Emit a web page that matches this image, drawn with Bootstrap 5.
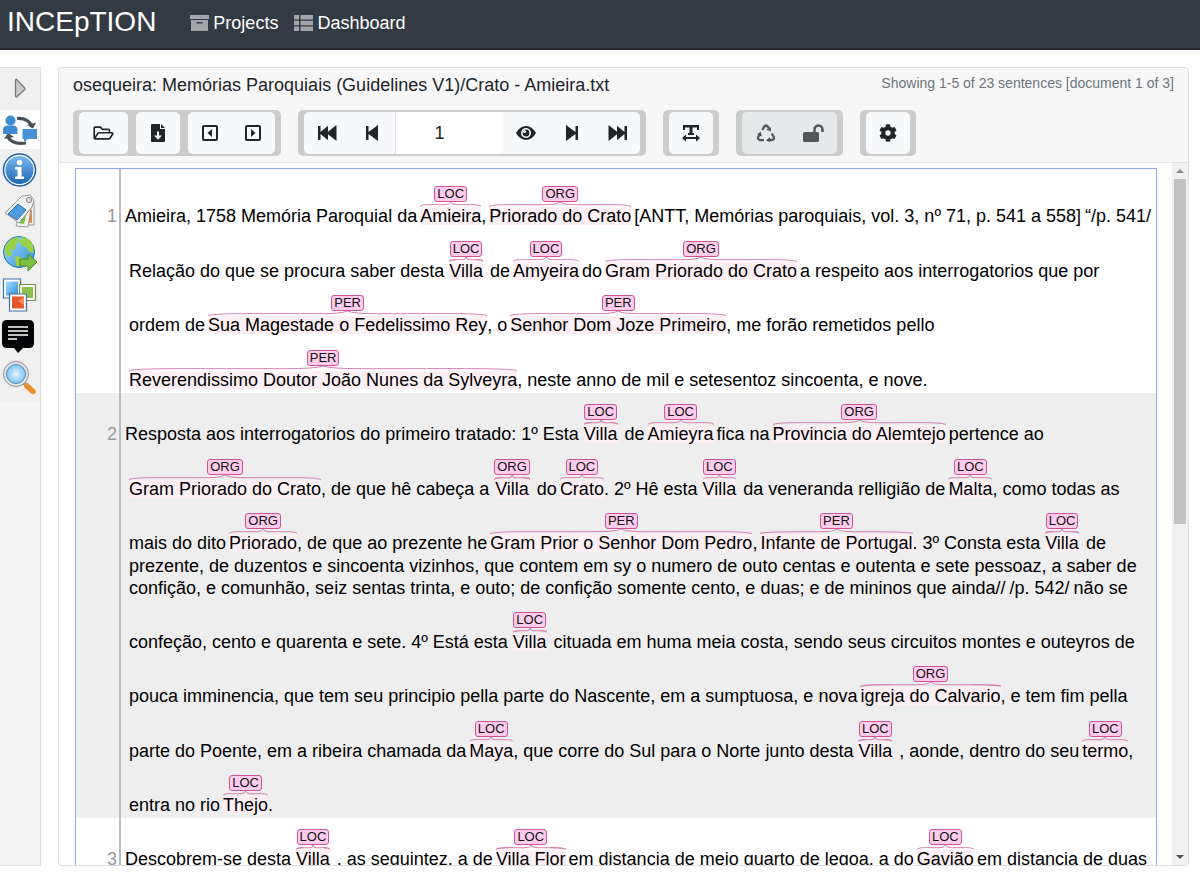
<!doctype html>
<html lang="en">
<head>
<meta charset="utf-8">
<meta name="viewport" content="width=device-width, initial-scale=1">
<title>INCEpTION</title>
<link href="https://cdn.jsdelivr.net/npm/bootstrap@5.3.0/dist/css/bootstrap.min.css" rel="stylesheet">
<script src="https://cdn.jsdelivr.net/npm/bootstrap@5.3.0/dist/js/bootstrap.bundle.min.js"></script>
<style>
body { font-family: "Liberation Sans", Arial, sans-serif; font-size: 18px; line-height: 22px; color: #212529; background: #fff; }
.topbar { --bs-navbar-padding-y: 0; background: #323a43; border-bottom: 2px solid #272b30; min-height: 50px; }
.topbar .navbar-brand { font-size: 28px; line-height: 44px; color: #fff; padding: 0; margin: 0 34px 4px 0; }
.topbar .navbar-nav { padding-bottom: 2px; }
.topbar .nav-link { color: #fff; font-size: 18px; }
.topbar svg { fill: #a3a6a9; }
.sidetabs { width: 41px; margin-right: 17px; background: #f5f5f5; border: 1px solid #ddd; border-left: 0; }
.sidetabs button { width: 100%; height: 42px; border: 0; padding: 0; background: #f0f0f0; display: block; text-align: left; }
.sidetabs button.current { background: #fff; }
.sidetabs svg { display: block; margin-left: 2px; }
.doc { border-color: #ddd; border-radius: 4px; }
.doc .card-header { background: #f7f7f7; border-color: #dfe3e5; padding: 6px 14px 6px 14px; }
.doc-status { font-size: 14px; line-height: 18px; color: #6c757d; }
.tools { gap: 17px; padding-top: 14px; }
.tool-set { background: #ccc; border-radius: 5px; padding: 2px 6px; gap: 8px; min-height: 46px; }
.tool-set .btn { height: 42px; min-width: 44px; padding: 0; border: 0; background: #f8f9fa; border-radius: 5px; color: #212529; display: flex; align-items: center; justify-content: center; }
.tool-set .btn-wide { min-width: 49px; }
.tool-set .btn:disabled { min-width: 48px; background: #e6e9e9; color: #212529; opacity: 1; }
.tool-set .btn:disabled svg { opacity: .75; }
.tool-set .steps > .btn { min-width: 46px; }
.tool-set .steps > .btn-wide { min-width: 49px; }
.tool-set input { width: 107px; height: 42px; border: 1px solid #dfe3e5; border-width: 0 1px; border-radius: 0; text-align: center; padding: 0 18px 0 0; font-size: 18px; color: #212529; flex: none; }
.tool-set .btn-group > .btn { flex: none; }
.page-view { border: 1px solid #8ca8f0; border-bottom: 0; margin: 5px 15px 0 16px; padding-top: 6px; color: #000; }
.sentence { display: flex; }
.sentence.shade { background: #eee; }
.num { width: 45px; flex: none; text-align: right; padding: 30px 2px 0 0; border-right: 2px solid #bbb; color: #999; }
.lead-space { height: 6px; width: 45px; border-right: 2px solid #bbb; margin-top: -6px; }
.rows { padding-left: 8px; }
.row-line { display: flex; align-items: flex-end; height: 54px; padding-bottom: 2px; white-space: pre; }
.row-line:nth-child(even) { height: 55px; }
.row-line.low { height: 22px; padding-bottom: 1px; }
.row-line.first { margin-left: -4px; }
.anno { display: flex; flex-direction: column; align-items: center; margin: 0 3px 2px 3px; line-height: 18px; }
.anno.stop { margin-right: 0; }
.anno.start { margin-left: 0; }
.anno.apart { margin-left: 5px; margin-right: 7px; }
.anno b { font-weight: 400; font-size: 13px; line-height: 14px; border: 1px solid #cc5595; border-radius: 3px; background: #ffccee; padding: 0 2px; color: #111; }
.anno i { align-self: stretch; height: 5px; background: url("data:image/svg+xml,%3Csvg xmlns='http://www.w3.org/2000/svg' viewBox='0 0 100 5' preserveAspectRatio='none'%3E%3Cpath d='M0 4.500C4 2 14 2.700 40 2.700Q48 2.700 50 0Q52 2.700 60 2.700C86 2.700 96 2 100 4.500' fill='none' stroke='%23d77faf' vector-effect='non-scaling-stroke'/%3E%3C/svg%3E") 0 0 / 100% 100% no-repeat; }
.anno span { background: #fdf0f5; border-radius: 2px; }
.scroller { width: 16px; flex: none; background: #f1f1f1; padding: 6px 2px; }
.thumb { background: #c1c1c1; margin-top: 6px; }
.arrow-up, .arrow-down { border: 4px solid transparent; width: 8px; margin: 0 auto; }
.arrow-up { border-top: 0; border-bottom-color: #8a8a8a; }
.arrow-down { border-bottom: 0; border-top-color: #505050; margin-top: auto; }
</style>
</head>
<body class="d-flex flex-column vh-100 overflow-hidden">
<nav class="navbar navbar-expand topbar">
  <div class="container-fluid justify-content-start" style="--bs-gutter-x:14px">
    <a class="navbar-brand" href="#">INCEpTION</a>
    <div class="navbar-nav gap-3">
      <a class="nav-link d-flex align-items-center gap-1 p-0" href="#"><svg width="19" height="16" viewBox="0 0 19 16"><path d="M0 0h19v4H0zM1 5h17v11H1zM6.500 7v1.500h6V7z" fill-rule="evenodd"/></svg>Projects</a>
      <a class="nav-link d-flex align-items-center gap-1 p-0" href="#"><svg width="19" height="16" viewBox="0 0 19 16"><path d="M0 0h5v4.500H0zM6.500 0H19v4.500H6.500zM0 5.800h5v4.400H0zM6.500 5.800H19v4.400H6.500zM0 11.500h5V16H0zM6.500 11.500H19V16H6.500z"/></svg>Dashboard</a>
    </div>
  </div>
</nav>

<svg width="0" height="0" class="position-absolute" aria-hidden="true">
  <defs>
    <linearGradient id="gBlue" x2="0" y2="1"><stop offset="0" stop-color="#7bb8ee"/><stop offset="1" stop-color="#1f66b5"/></linearGradient>
    <linearGradient id="gSky" x2="1" y2="1"><stop offset="0" stop-color="#a9dcff"/><stop offset="1" stop-color="#2b8fd6"/></linearGradient>
    <radialGradient id="gGlass"><stop offset="0" stop-color="#e5f6ff"/><stop offset="1" stop-color="#7fc4f0"/></radialGradient>
  </defs>
</svg>

<main class="d-flex flex-fill overflow-hidden" style="padding:17px 11px 9px 0">
  <aside class="sidetabs flex-shrink-0">
    <button type="button" aria-label="Expand"><svg width="36" height="42" viewBox="0 0 36 42"><path d="M13.500 12.500q0-2 1.500-.8l7.500 8q1 1 0 2l-7.500 7q-1.500 1-1.500-1z" fill="#c9c9c9" stroke="#777" stroke-width="1.300"/></svg></button>
    <button type="button" class="current" aria-label="Curation" style="height:39px"><svg width="36" height="36" viewBox="0 0 36 36"><path d="M15 6.500Q27 6 30 15M5 24Q10 33 24 31" fill="none" stroke="#4a5058" stroke-width="3.200"/><path d="M25 13l6 3.500 3-6zM2 27l4-6 6 4z" fill="#4a5058"/><circle cx="8.500" cy="8.500" r="5" fill="#3f8ad0"/><path d="M1 22v-4q0-4.500 5-4.500h5q4.500 0 4.500 4.500v4z" fill="#3f8ad0"/><path d="M20.500 17H35v10h-9l-4 3v-3h-1.500z" fill="#4a90d4"/></svg></button>
    <button type="button" aria-label="Document info"><svg width="36" height="38" viewBox="0 0 36 38"><circle cx="17.500" cy="19" r="16" fill="#fff" stroke="#1b5fa8" stroke-width="1.500"/><circle cx="17.500" cy="19" r="14" fill="url(#gBlue)"/><circle cx="17.500" cy="11.500" r="2.700" fill="#fff"/><path d="M13 16h6.500v9.500H22V28h-9v-2.500h2.500v-7H13z" fill="#fff"/></svg></button>
    <button type="button" aria-label="Layers"><svg width="36" height="40" viewBox="0 0 36 40"><g fill="#f4f4f4" stroke="#999"><path d="M25 7l7 3v23H22z"/><path d="M26 17l4 1v13h-5z" fill="#e88a4a" stroke="none"/><path d="M22 7l8 3-4 25-12-1z"/><path d="M21 17l4 3-3 12-6-1z" fill="#7cc043" stroke="none"/><path d="M20 4l8-1 4 5-2 7-13 16-14-10z"/></g><path d="M16 12l8 6-9 10-9-6z" fill="#4f9fe0" stroke="#2c6cb0"/><circle cx="27" cy="8" r="2.700" fill="#ddd" stroke="#888"/></svg></button>
    <button type="button" aria-label="External search"><svg width="36" height="40" viewBox="0 0 36 40"><circle cx="17" cy="18" r="15.500" fill="url(#gSky)" stroke="#2477b8"/><path d="M3 13q4-9 13-10l2 4-4 3-1 5-5 2 2 4-4 2q-4-4-3-10zM20 3q8 1 11 8l1 8-5-1-3-5-4-1-2-4zM13 22l6 1 2 4-3 5h-4z" fill="#9bd045"/><path d="M18 25h8v-5l9 8-9 9v-5h-8z" fill="#7dc142" stroke="#4a8a1c"/></svg></button>
    <button type="button" aria-label="Images"><svg width="36" height="40" viewBox="0 0 36 40"><g fill="#fff" stroke-width="1.200"><path d="M1.500 3h17v19h-17z" stroke="#3a6ea8"/><path d="M4 5.500h12v14H4z" fill="url(#gSky)"/><path d="M17.500 8.500h16v16h-16z" stroke="#6f8f4a"/><path d="M20 11h11v11H20z" fill="#8fc24c"/><path d="M7.500 18h17v17h-17z" stroke="#4a6a98"/><path d="M10 20.500h12v12H10z" fill="#e5562c"/><path d="M16 25l6-4v8z" fill="#f58a5a"/></g></svg></button>
    <button type="button" aria-label="Comments"><svg width="36" height="40" viewBox="0 0 36 40"><path d="M5 2h22q5 0 5 5v18q0 5-5 5h-6l-5 5-4-5H5q-5 0-5-5V7q0-5 5-5z" fill="#050508"/><path d="M6 9h20M6 13h20M6 17h20M6 21h9" stroke="#fff" stroke-width="1.600"/></svg></button>
    <button type="button" aria-label="Search"><svg width="36" height="42" viewBox="0 0 36 42"><path d="M21 23l8 8" stroke="#999" stroke-width="4"/><path d="M25 27l6 5.500" stroke="#e8912c" stroke-width="5.500" stroke-linecap="round"/><circle cx="14" cy="15" r="12.500" fill="#e6e6e6" stroke="#8a8f98"/><circle cx="14" cy="15" r="9.500" fill="url(#gGlass)" stroke="#4b8fc4"/></svg></button>
  </aside>

  <section class="card doc flex-fill overflow-hidden">
    <header class="card-header">
      <div class="d-flex justify-content-between">
        <div>osequeira: Memórias Paroquiais (Guidelines V1)/Crato - Amieira.txt</div>
        <div class="doc-status">Showing 1-5 of 23 sentences [document 1 of 3]</div>
      </div>
      <div class="tools d-flex">
        <div class="tool-set d-flex">
          <button type="button" class="btn btn-wide" aria-label="Open"><svg width="21" height="18" viewBox="0 0 576 512" fill="currentColor"><path d="M527.900 224H480v-48c0-26.500-21.500-48-48-48H272l-64-64H48C21.500 64 0 85.500 0 112v288c0 26.500 21.500 48 48 48h400c16.500 0 31.900-8.500 40.700-22.600l79.900-128c20-31.900-3-73.400-40.700-73.400zM48 118c0-3.300 2.700-6 6-6h134.100l64 64H426c3.300 0 6 2.700 6 6v42H152c-16.800 0-32.400 8.800-41.100 23.200L48 351.400zm400 282H72l77.200-128H528z"/></svg></button>
          <button type="button" class="btn" aria-label="Export"><svg width="14" height="18" viewBox="0 0 14 18"><path d="M1 0h8v5h5v12q0 1-1 1H1q-1 0-1-1V1q0-1 1-1zM10 0l4 4h-4zM6 7.500v4H3l4 4.300 4-4.300H8v-4z" fill="currentColor" fill-rule="evenodd"/></svg></button>
          <div class="btn-group">
            <button type="button" class="btn" aria-label="Previous document"><svg width="16" height="16" viewBox="0 0 16 16"><rect x="1" y="1" width="14" height="14" rx="1" fill="none" stroke="currentColor" stroke-width="2"/><path d="M10 4v8L5.500 8z" fill="currentColor"/></svg></button>
            <button type="button" class="btn" aria-label="Next document"><svg width="16" height="16" viewBox="0 0 16 16"><rect x="1" y="1" width="14" height="14" rx="1" fill="none" stroke="currentColor" stroke-width="2"/><path d="M6 4v8l4.500-4z" fill="currentColor"/></svg></button>
          </div>
        </div>
        <div class="tool-set d-flex">
          <div class="btn-group steps">
            <button type="button" class="btn" aria-label="First page"><svg width="19" height="16" viewBox="0 0 19 16"><path d="M0 1h2.500v6L10 .8v6L18.500 0v16L10 9.200v6L2.500 9v6H0z" fill="currentColor"/></svg></button>
            <button type="button" class="btn" aria-label="Previous page"><svg width="12" height="16" viewBox="0 0 12 16"><path d="M0 1h2.500v6L12 0v16L2.500 9v6H0z" fill="currentColor"/></svg></button>
            <input type="text" class="form-control" value="1" aria-label="Sentence">
            <button type="button" class="btn btn-wide" aria-label="Show"><svg width="20" height="16" viewBox="0 0 20 16"><path d="M0 8Q4 1 10 1t10 7q-4 7-10 7T0 8z" fill="currentColor"/><circle cx="10" cy="8" r="5" fill="#f8f9fa"/><circle cx="10" cy="8" r="3.400" fill="currentColor"/><circle cx="8.600" cy="6.600" r="1.500" fill="#f8f9fa"/></svg></button>
            <button type="button" class="btn" aria-label="Next page"><svg width="12" height="16" viewBox="0 0 12 16"><path d="M12 1H9.500v6L0 0v16l9.500-7v6H12z" fill="currentColor"/></svg></button>
            <button type="button" class="btn" aria-label="Last page"><svg width="19" height="16" viewBox="0 0 19 16"><path d="M19 1h-2.500v6L9 .8v6L.5 0v16L9 9.200v6L16.500 9v6H19z" fill="currentColor"/></svg></button>
          </div>
        </div>
        <div class="tool-set d-flex">
          <button type="button" class="btn" aria-label="Text direction"><svg width="18" height="17" viewBox="0 0 18 17"><path d="M1 0h16v5h-2V2.500h-4.500V8H12v2H6V8h1.500V2.500H3V5H1zM0 13l4-3.500V12h10V9.500l4 3.500-4 3.800V14H4v2.800z" fill="currentColor"/></svg></button>
        </div>
        <div class="tool-set d-flex">
          <div class="btn-group">
            <button type="button" class="btn" disabled aria-label="Reset"><svg width="20" height="18" viewBox="0 0 20 18"><g id="arc" fill="none" stroke="currentColor" stroke-width="2.300"><path d="M6.200 6l2-3.400q1.800-2.200 3.600 0l1.500 2.600"/><path d="M15.200 7.500l-5-1.700 4.400-2.700z" fill="currentColor" stroke="none"/></g><use href="#arc" transform="rotate(120 10 10.500)"/><use href="#arc" transform="rotate(240 10 10.500)"/></svg></button>
            <button type="button" class="btn" disabled aria-label="Unlock"><svg width="21" height="18" viewBox="0 0 21 18"><rect y="8" width="16" height="10" rx="1.500" fill="currentColor"/><path d="M11.500 9V5.500a4 4 0 0 1 8 0V8" fill="none" stroke="currentColor" stroke-width="2.500"/></svg></button>
          </div>
        </div>
        <div class="tool-set d-flex">
          <button type="button" class="btn" aria-label="Settings"><svg width="18" height="18" viewBox="0 0 512 512" fill="currentColor"><path d="M487.400 315.700l-42.600-24.600c4.300-23.200 4.300-47 0-70.200l42.600-24.600c4.900-2.800 7.100-8.600 5.500-14-11.100-35.600-30-67.800-54.700-94.600-3.800-4.100-10-5.100-14.800-2.300L380.800 110c-17.900-15.400-38.500-27.300-60.800-35.100V25.800c0-5.600-3.900-10.500-9.400-11.700-36.700-8.200-74.300-7.800-109.200 0-5.500 1.200-9.400 6.100-9.400 11.700V75c-22.200 7.900-42.800 19.800-60.800 35.100L88.700 85.500c-4.900-2.800-11-1.900-14.800 2.300-24.700 26.700-43.600 58.900-54.700 94.600-1.700 5.400.6 11.200 5.500 14L67.300 221c-4.300 23.200-4.300 47 0 70.200l-42.600 24.600c-4.900 2.800-7.100 8.600-5.500 14 11.100 35.600 30 67.800 54.700 94.600 3.800 4.100 10 5.100 14.800 2.300l42.600-24.600c17.900 15.400 38.500 27.300 60.800 35.100v49.200c0 5.600 3.900 10.500 9.400 11.700 36.700 8.200 74.300 7.800 109.200 0 5.500-1.200 9.400-6.100 9.400-11.700v-49.200c22.200-7.900 42.800-19.800 60.800-35.100l42.600 24.600c4.900 2.800 11 1.900 14.800-2.300 24.700-26.700 43.600-58.900 54.700-94.600 1.500-5.500-.7-11.300-5.600-14.100zM256 336c-44.100 0-80-35.900-80-80s35.900-80 80-80 80 35.900 80 80-35.900 80-80 80z"/></svg></button>
        </div>
      </div>
    </header>
    <div class="d-flex flex-fill overflow-hidden">
      <div class="page-view flex-fill overflow-hidden">
        <div class="lead-space"></div>
        <div class="sentence">
          <div class="num">1</div>
          <div class="rows">
            <div class="row-line first"><span>Amieira, 1758 Memória Paroquial da</span><span class="anno stop"><b>LOC</b><i></i><span>Amieira</span></span><span>,</span><span class="anno"><b>ORG</b><i></i><span>Priorado do Crato</span></span><span>[ANTT, Memórias paroquiais, vol. 3, nº 71, p. 541 a 558]</span><span class="ms-1">“/p. 541/</span></div>
            <div class="row-line"><span>Relação do que se procura saber desta</span><span class="anno apart"><b>LOC</b><i></i><span>Villa</span></span><span>de</span><span class="anno"><b>LOC</b><i></i><span>Amyeira</span></span><span>do</span><span class="anno"><b>ORG</b><i></i><span>Gram Priorado do Crato</span></span><span>a respeito aos interrogatorios que por</span></div>
            <div class="row-line"><span>ordem de</span><span class="anno stop"><b>PER</b><i></i><span>Sua Magestade o Fedelissimo Rey</span></span><span>, o</span><span class="anno stop"><b>PER</b><i></i><span>Senhor Dom Joze Primeiro</span></span><span>, me forão remetidos pello</span></div>
            <div class="row-line"><span class="anno start stop"><b>PER</b><i></i><span>Reverendissimo Doutor João Nunes da Sylveyra</span></span><span>, neste anno de mil e setesentoz sincoenta, e nove.</span></div>
          </div>
        </div>
        <div class="sentence shade">
          <div class="num">2</div>
          <div class="rows">
            <div class="row-line first"><span>Resposta aos interrogatorios do primeiro tratado: 1º Esta</span><span class="anno apart"><b>LOC</b><i></i><span>Villa</span></span><span>de</span><span class="anno"><b>LOC</b><i></i><span>Amieyra</span></span><span>fica na</span><span class="anno"><b>ORG</b><i></i><span>Provincia do Alemtejo</span></span><span>pertence ao</span></div>
            <div class="row-line"><span class="anno start stop"><b>ORG</b><i></i><span>Gram Priorado do Crato</span></span><span>, de que hê cabeça a</span><span class="anno apart"><b>ORG</b><i></i><span>Villa</span></span><span>do</span><span class="anno stop"><b>LOC</b><i></i><span>Crato</span></span><span>. 2º Hê esta</span><span class="anno apart"><b>LOC</b><i></i><span>Villa</span></span><span>da veneranda relligião de</span><span class="anno stop"><b>LOC</b><i></i><span>Malta</span></span><span>, como todas as</span></div>
            <div class="row-line"><span>mais do dito</span><span class="anno stop"><b>ORG</b><i></i><span>Priorado</span></span><span>, de que ao prezente he</span><span class="anno stop"><b>PER</b><i></i><span>Gram Prior o Senhor Dom Pedro</span></span><span>,</span><span class="anno stop"><b>PER</b><i></i><span>Infante de Portugal</span></span><span>. 3º Consta esta</span><span class="anno apart"><b>LOC</b><i></i><span>Villa</span></span><span>de</span></div>
            <div class="row-line low">prezente, de duzentos e sincoenta vizinhos, que contem em sy o numero de outo centas e outenta e sete pessoaz, a saber de</div>
            <div class="row-line low"><span>confição, e comunhão, seiz sentas trinta, e outo; de confição somente cento, e duas; e de mininos que ainda//</span><span class="mx-1">/p. 542/</span><span>não se</span></div>
            <div class="row-line"><span>confeção, cento e quarenta e sete. 4º Está esta</span><span class="anno apart"><b>LOC</b><i></i><span>Villa</span></span><span>cituada em huma meia costa, sendo seus circuitos montes e outeyros de</span></div>
            <div class="row-line"><span>pouca imminencia, que tem seu principio pella parte do Nascente, em a sumptuosa, e nova</span><span class="anno stop"><b>ORG</b><i></i><span>igreja do Calvario</span></span><span>, e tem fim pella</span></div>
            <div class="row-line"><span>parte do Poente, em a ribeira chamada da</span><span class="anno stop"><b>LOC</b><i></i><span>Maya</span></span><span>, que corre do Sul para o Norte junto desta</span><span class="anno apart"><b>LOC</b><i></i><span>Villa</span></span><span>, aonde, dentro do seu</span><span class="anno stop"><b>LOC</b><i></i><span>termo</span></span><span>,</span></div>
            <div class="row-line"><span>entra no rio</span><span class="anno stop"><b>LOC</b><i></i><span>Thejo</span></span><span>.</span></div>
          </div>
        </div>
        <div class="sentence">
          <div class="num">3</div>
          <div class="rows">
            <div class="row-line first"><span>Descobrem-se desta</span><span class="anno apart"><b>LOC</b><i></i><span>Villa</span></span><span>, as seguintez, a de</span><span class="anno"><b>LOC</b><i></i><span>Villa Flor</span></span><span>em distancia de meio quarto de legoa, a do</span><span class="anno"><b>LOC</b><i></i><span>Gavião</span></span><span>em distancia de duas</span></div>
          </div>
        </div>
      </div>
      <div class="scroller d-flex flex-column">
        <div class="arrow-up"></div>
        <div class="thumb" style="height:50%"></div>
        <div class="arrow-down"></div>
      </div>
    </div>
  </section>
</main>
</body>
</html>
